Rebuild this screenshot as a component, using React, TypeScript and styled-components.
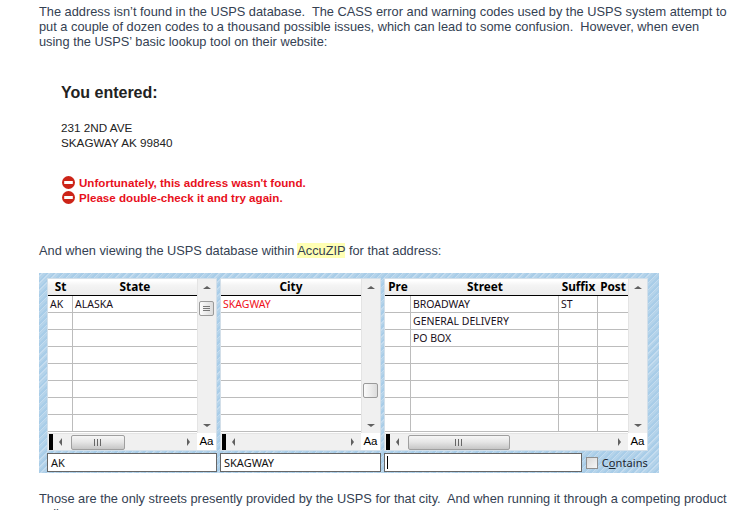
import React from "react";
import styled, { createGlobalStyle } from "styled-components";

const Global = createGlobalStyle`
  html, body { margin: 0; padding: 0; background: #fff; overflow: hidden; }
`;
const Page = styled.div`
  width: 742px; height: 510px; overflow: hidden; box-sizing: border-box;
  padding: 4px 0 0 39px;
  font-family: "Liberation Sans", Arial, sans-serif; font-size: 12.8px; line-height: 15px; color: #344152;
`;
const Para = styled.p<{ $top?: number }>`
  margin: ${p => p.$top ?? 0}px 0 0; width: 690px; white-space: pre-wrap;
`;
const Result = styled.section`
  margin: 0 0 0 22px; padding-top: 32px; color: #222; height: 153px; box-sizing: border-box;
`;
const Heading = styled.h2`
  margin: 0; font-size: 16px; line-height: 24px; font-weight: 700; color: #222;
`;
const Address = styled.div`
  margin-top: 15px; font-size: 11.7px; line-height: 15px;
`;
const Errors = styled.ul`
  list-style: none; margin: 25px 0 0; padding: 0;
`;
const ErrorRow = styled.li`
  display: flex; align-items: center; gap: 4px; height: 15px; margin-left: 1px;
  font-size: 11.6px; font-weight: 700; color: #e8101c;
`;
const Highlight = styled.span`
  background: #ffffb4;
`;
const Hatch = styled.div`
  margin-top: 15px; width: 620px; height: 200px; box-sizing: border-box;
  padding: 5px 0 0 8px;
  display: grid; grid-template-columns: 170px 161px 264px; grid-template-rows: 173px 19px; column-gap: 3px; row-gap: 2px;
  background: repeating-linear-gradient(135deg, #a9cde8 0 2px, #c4dcef 2px 3px, #b4d3ea 3px 5px);
  font-family: "Noto Sans", Tahoma, sans-serif; font-size: 10.5px; color: #111;
`;
const Panel = styled.div`
  display: grid; grid-template-columns: 1fr 19px; grid-template-rows: 1fr 17px;
  background: #f0f0f0; border: 1px solid #d3dfe9; min-width: 0; box-sizing: border-box;
`;
const Table = styled.div`
  background: #fff; display: flex; flex-direction: column; min-width: 0; overflow: hidden;
`;
const HeaderRow = styled.div`
  display: flex; height: 16px; border-bottom: 1px solid #000; flex: none;
  background: linear-gradient(#fff 0 10%, #f4f4f4 40%, #ececec);
`;
const HeaderCell = styled.div<{ $w?: number }>`
  ${p => (p.$w ? `width:${p.$w}px;flex:none;` : "flex:1;")}
  box-sizing: border-box; text-align: center; font-weight: 700; font-size: 11.8px; line-height: 15px; color: #000;
`;
const Row = styled.div`
  display: flex; height: 17px; flex: none; box-sizing: border-box; border-bottom: 1px solid #bcbcbc;
`;
const Cell = styled.div<{ $w?: number; $red?: boolean }>`
  ${p => (p.$w ? `width:${p.$w}px;flex:none;border-right:1px solid #bcbcbc;` : "flex:1;")}
  box-sizing: border-box; padding-left: 2px; line-height: 16px; white-space: nowrap;
  color: ${p => (p.$red ? "#f01020" : "#1a1020")};
`;
const VBar = styled.div`
  display: flex; flex-direction: column; align-items: center; background: #f0f0f0; border-left: 1px solid #e4e4e4; position: relative;
`;
const Arrow = styled.span<{ $dir: "up" | "down" | "left" | "right" }>`
  width: 0; height: 0; flex: none; border-style: solid;
  ${p =>
    p.$dir === "up" ? "border-width:0 4px 3px;border-color:transparent transparent #606060;" :
    p.$dir === "down" ? "border-width:3px 4px 0;border-color:#606060 transparent transparent;" :
    p.$dir === "left" ? "border-width:4px 3px 4px 0;border-color:transparent #606060 transparent transparent;" :
    "border-width:4px 0 4px 3px;border-color:transparent transparent transparent #606060;"}
`;
const VThumb = styled.div<{ $top: number }>`
  position: absolute; top: ${p => p.$top}px; left: 1px; width: 15px; height: 15px; box-sizing: border-box;
  border: 1px solid #9a9a9a; border-radius: 2px;
  background: linear-gradient(90deg, #fbfbfb, #dcdcdc);
  display: flex; flex-direction: column; justify-content: center; align-items: center; gap: 1px;
`;
const GripLine = styled.i`
  display: block; width: 7px; height: 1px; background: #777;
`;
const UpSlot = styled.div`
  height: 17px; display: flex; align-items: center; justify-content: center;
`;
const DownSlot = styled.div`
  margin-top: auto; height: 15px; display: flex; align-items: center; justify-content: center;
`;
const HBar = styled.div`
  display: flex; align-items: center; background: #f0f0f0; padding: 0 4px 0 1px; position: relative; border-top: 1px solid #e4e4e4;
`;
const BlackMark = styled.span`
  width: 4px; height: 16px; background: #000; flex: none; margin-right: 6px;
`;
const HThumb = styled.div<{ $w: number }>`
  width: ${p => p.$w}px; height: 15px; box-sizing: border-box; margin-left: 9px; flex: none;
  border: 1px solid #9f9f9f; border-radius: 2px;
  background: linear-gradient(#f6f6f6, #e6e6e6 45%, #c6c6c6);
  display: flex; align-items: center; justify-content: center; gap: 1px;
`;
const HGrip = styled.i`
  display: block; width: 1px; height: 7px; background: #666; margin: 0 1px 0 0;
`;
const RightArrow = styled.span`
  margin-left: auto; display: flex; margin-right: 3px;
`;
const CaseCell = styled.div`
  background: #fff; font-family: "Liberation Sans", sans-serif; font-size: 11.5px; line-height: 17px; text-align: center; color: #000;
`;
const InputBox = styled.div<{ $w?: number }>`
  box-sizing: border-box; height: 19px; ${p => (p.$w ? `width:${p.$w}px;` : "")}
  border: 1px solid #666; background: #fff; padding-left: 3px; line-height: 17px; font-size: 11px; color: #111;
`;
const Caret = styled.span`
  display: block; width: 1px; height: 13px; margin: 2px 0 0 -1px; background: #000;
`;
const SearchCell = styled.div`
  display: flex; align-items: center;
`;
const CheckBox = styled.span`
  width: 12px; height: 12px; box-sizing: border-box; margin: 0 4px; flex: none;
  border: 1px solid #8f8f8f; background: linear-gradient(135deg, #d8d8d8, #f6f6f6);
`;
const Label = styled.span`
  font-size: 11px; color: #1c2530; letter-spacing: 0.1px; u { text-underline-offset: 1px; }
`;

const StopIcon = () => (
  <svg width="13" height="13" viewBox="0 0 13 13" aria-hidden="true">
    <circle cx="6.5" cy="6.5" r="6.5" fill="#cc2418" />
    <rect x="2.2" y="5" width="8.6" height="3" fill="#fff" />
  </svg>
);

type Col = { title: string; w?: number };

const EmptyRows = ({ cols, data }: { cols: Col[]; data: { t: string; red?: boolean }[][] }) => (
  <>
    {Array.from({ length: 8 }).map((_, r) => (
      <Row key={r}>
        {cols.map((c, i) => {
          const d = data[r]?.[i];
          return <Cell key={c.title} $w={c.w} $red={d?.red}>{d?.t}</Cell>;
        })}
      </Row>
    ))}
  </>
);

const Grid = ({ cols, data, vThumb, vGrip, hThumb }: {
  cols: Col[]; data: { t: string; red?: boolean }[][]; vThumb?: number; vGrip?: boolean; hThumb?: number;
}) => (
  <Panel>
    <Table>
      <HeaderRow>
        {cols.map(c => <HeaderCell key={c.title} $w={c.w}>{c.title}</HeaderCell>)}
      </HeaderRow>
      <EmptyRows cols={cols} data={data} />
    </Table>
    <VBar>
      <UpSlot><Arrow $dir="up" /></UpSlot>
      {vThumb !== undefined && (
        <VThumb $top={vThumb}>
          {vGrip && <><GripLine /><GripLine /><GripLine /></>}
        </VThumb>
      )}
      <DownSlot><Arrow $dir="down" /></DownSlot>
    </VBar>
    <HBar>
      <BlackMark />
      <Arrow $dir="left" />
      {hThumb && (
        <HThumb $w={hThumb}><HGrip /><HGrip /><HGrip /></HThumb>
      )}
      <RightArrow><Arrow $dir="right" /></RightArrow>
    </HBar>
    <CaseCell>Aa</CaseCell>
  </Panel>
);

export default function App() {
  return (
    <Page>
      <Global />
      <Para>{"The address isn’t found in the USPS database.  The CASS error and warning codes used by the USPS system attempt to put a couple of dozen codes to a thousand possible issues, which can lead to some confusion.  However, when even using the USPS’ basic lookup tool on their website:"}</Para>
      <Result>
        <Heading>You entered:</Heading>
        <Address>231 2ND AVE<br />SKAGWAY AK 99840</Address>
        <Errors>
          <ErrorRow><StopIcon />Unfortunately, this address wasn't found.</ErrorRow>
          <ErrorRow><StopIcon />Please double-check it and try again.</ErrorRow>
        </Errors>
      </Result>
      <Para $top={41}>And when viewing the USPS database within <Highlight>AccuZIP</Highlight> for that address:</Para>
      <Hatch>
        <Grid
          cols={[{ title: "St", w: 25 }, { title: "State" }]}
          data={[[{ t: "AK" }, { t: "ALASKA" }]]}
          vThumb={22}
          vGrip
          hThumb={54}
        />
        <Grid
          cols={[{ title: "City" }]}
          data={[[{ t: "SKAGWAY", red: true }]]}
          vThumb={104}
        />
        <Grid
          cols={[{ title: "Pre", w: 26 }, { title: "Street", w: 148 }, { title: "Suffix", w: 39 }, { title: "Post" }]}
          data={[
            [{ t: "" }, { t: "BROADWAY" }, { t: "ST" }, { t: "" }],
            [{ t: "" }, { t: "GENERAL DELIVERY" }],
            [{ t: "" }, { t: "PO BOX" }],
          ]}
          hThumb={102}
        />
        <InputBox>AK</InputBox>
        <InputBox>SKAGWAY</InputBox>
        <SearchCell>
          <InputBox $w={198}><Caret /></InputBox>
          <CheckBox />
          <Label>C<u>o</u>ntains</Label>
        </SearchCell>
      </Hatch>
      <Para $top={18}>{"Those are the only streets presently provided by the USPS for that city.  And when running it through a competing product online"}</Para>
    </Page>
  );
}
